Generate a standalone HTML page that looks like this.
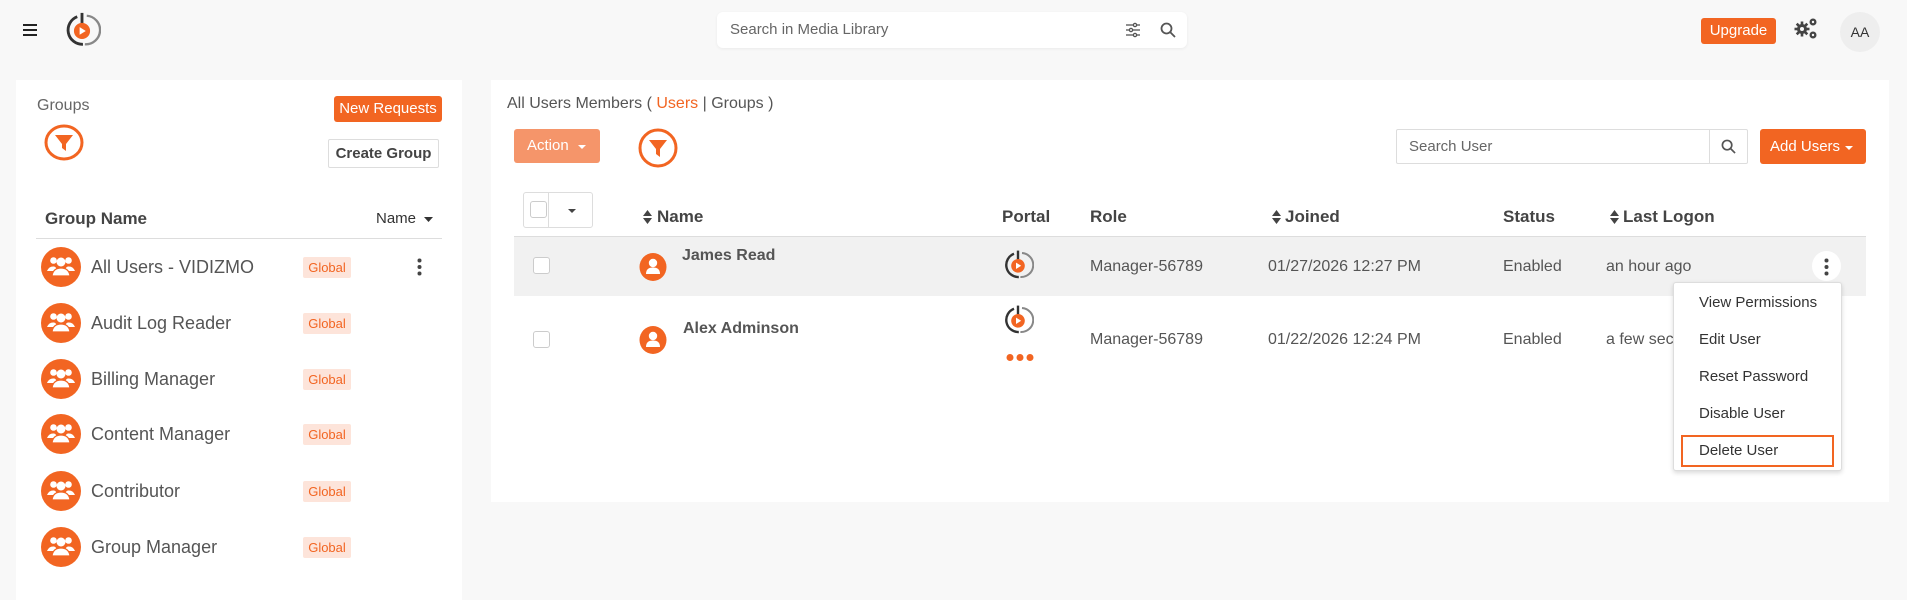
<!DOCTYPE html>
<html><head><meta charset="utf-8"><style>
*{margin:0;padding:0;box-sizing:border-box}
body{width:1907px;height:581px;background:#f8f8f8;font-family:"Liberation Sans",sans-serif;color:#555;position:relative;overflow:hidden}
.a{position:absolute;white-space:nowrap}
.btn{position:absolute;background:#f26522;color:#fff;border-radius:3px;text-align:center;font-size:15px}
.badge{position:absolute;left:303px;width:48px;height:21px;background:#fde4da;color:#f26522;font-size:13px;text-align:center;line-height:21px;border-radius:2px}
.gname{position:absolute;left:91px;font-size:18px;color:#555}
.cb{position:absolute;width:17px;height:17px;border:1px solid #ccc;border-radius:3px;background:#fff}
.th{position:absolute;top:207px;font-size:17px;font-weight:bold;color:#444}
.td{position:absolute;font-size:16px;color:#555}
.mi{position:absolute;left:1699px;font-size:15px;color:#333}
</style></head><body>
<!-- top bar -->
<svg class="a" style="left:23px;top:24px" width="14" height="12"><rect y="0" width="14" height="2" fill="#222"/><rect y="5" width="14" height="2" fill="#222"/><rect y="10" width="14" height="2" fill="#222"/></svg>
<svg class="a" style="left:63px;top:11px" width="38" height="38" viewBox="0 0 40 40"><path d="M15 6 A15 15 0 0 0 21 35" fill="none" stroke="#333" stroke-width="3"/><path d="M25 5 A15 15 0 0 1 23 35" fill="none" stroke="#888" stroke-width="2.5"/><line x1="20" y1="2" x2="20" y2="14" stroke="#333" stroke-width="3"/><circle cx="20" cy="21" r="8.5" fill="#f26522"/><path d="M17.5 17 L24 21 L17.5 25Z" fill="#fff"/></svg>
<div class="a" style="left:717px;top:12px;width:470px;height:36px;background:#fff;border-radius:6px;box-shadow:0 1px 3px rgba(0,0,0,.06)"></div>
<div class="a" style="left:730px;top:21px;font-size:15px;color:#666">Search in Media Library</div>
<svg class="a" style="left:1125px;top:22px" width="16" height="16" viewBox="0 0 16 16" stroke="#555" stroke-width="1.3" fill="none"><line x1="1" y1="3" x2="15" y2="3"/><line x1="1" y1="8" x2="15" y2="8"/><line x1="1" y1="13" x2="15" y2="13"/><circle cx="10" cy="3" r="1.6" fill="#fff"/><circle cx="6" cy="8" r="1.6" fill="#fff"/><circle cx="10" cy="13" r="1.6" fill="#fff"/></svg>
<svg class="a" style="left:1160px;top:22px" width="16" height="16" viewBox="0 0 16 16" stroke="#555" stroke-width="1.8" fill="none"><circle cx="6.5" cy="6.5" r="5"/><line x1="10.3" y1="10.3" x2="15" y2="15"/></svg>
<div class="btn" style="left:1701px;top:18px;width:75px;height:26px;line-height:26px;font-size:15px">Upgrade</div>
<svg class="a" style="left:1793px;top:17px" width="26" height="24" viewBox="0 0 26 24" fill="#444"><circle cx="9" cy="12" r="5"/><g stroke="#444" stroke-width="2.6"><line x1="9" y1="4.5" x2="9" y2="19.5"/><line x1="1.5" y1="12" x2="16.5" y2="12"/><line x1="3.7" y1="6.7" x2="14.3" y2="17.3"/><line x1="14.3" y1="6.7" x2="3.7" y2="17.3"/></g><circle cx="9" cy="12" r="2" fill="#f8f8f8"/><circle cx="20" cy="5" r="3.5" fill="#444"/><circle cx="20" cy="5" r="1.2" fill="#f8f8f8"/><circle cx="20" cy="18" r="3.5" fill="#444"/><circle cx="20" cy="18" r="1.2" fill="#f8f8f8"/></svg>
<div class="a" style="left:1840px;top:12px;width:40px;height:40px;border-radius:50%;background:#eee;text-align:center;line-height:40px;font-size:14px;color:#333">AA</div>

<!-- left panel -->
<div class="a" style="left:16px;top:80px;width:446px;height:520px;background:#fff"></div>
<div class="a" style="left:37px;top:97px;font-size:16px;color:#666">Groups</div>
<div class="btn" style="left:334px;top:96px;width:108px;height:26px;line-height:26px;font-size:15px">New Requests</div>
<svg class="a" style="left:44px;top:124px" width="40" height="37" viewBox="0 0 40 37"><ellipse cx="20" cy="18.5" rx="18" ry="16.5" fill="none" stroke="#f26522" stroke-width="3"/><path d="M11 11 H29 L22 20 V27 L18 24 V20Z" fill="#f26522"/></svg>
<div class="a" style="left:328px;top:139px;width:111px;height:29px;border:1px solid #ddd;border-radius:2px;text-align:center;line-height:27px;font-size:15px;font-weight:bold;color:#444">Create Group</div>
<div class="a" style="left:45px;top:209px;font-size:17px;font-weight:bold;color:#444">Group Name</div>
<div class="a" style="left:376px;top:210px;font-size:15px;color:#333">Name</div>
<svg class="a" style="left:424px;top:217px" width="9" height="5"><path d="M0 0H9L4.5 5Z" fill="#333"/></svg>
<div class="a" style="left:36px;top:238px;width:406px;height:1px;background:#ddd"></div>

<svg width="0" height="0" style="position:absolute"><defs><g id="grp"><circle cx="20" cy="20" r="20" fill="#f26522"/><circle cx="20" cy="15" r="4.5" fill="#fff"/><circle cx="12.5" cy="13.5" r="3.3" fill="#fff"/><circle cx="27.5" cy="13.5" r="3.3" fill="#fff"/><path d="M6 24 Q8 19 13 19.5 Q16 20 15 24Z M34 24 Q32 19 27 19.5 Q24 20 25 24Z" fill="#fff"/><path d="M11 29 Q12 21 20 21 Q28 21 29 29Z" fill="#fff" stroke="#f26522" stroke-width="1.2"/></g>
<g id="logo"><path d="M15 6 A15 15 0 0 0 21 35" fill="none" stroke="#333" stroke-width="3"/><path d="M25 5 A15 15 0 0 1 23 35" fill="none" stroke="#888" stroke-width="2.5"/><line x1="20" y1="2" x2="20" y2="14" stroke="#333" stroke-width="3"/><circle cx="20" cy="21" r="8.5" fill="#f26522"/><path d="M17.5 17 L24 21 L17.5 25Z" fill="#fff"/></g>
<g id="usr"><ellipse cx="14" cy="14" rx="13.5" ry="14" fill="#f26522"/><circle cx="14" cy="10" r="4.2" fill="#fff"/><path d="M7 21 Q7 14.5 14 14.5 Q21 14.5 21 21Z" fill="#fff"/></g></defs></svg>

<svg class="a" style="left:41px;top:247px" width="40" height="40"><use href="#grp"/></svg>
<div class="gname" style="top:257px">All Users - VIDIZMO</div><div class="badge" style="top:257px">Global</div>
<svg class="a" style="left:417px;top:258px" width="5" height="18"><circle cx="2.5" cy="2.5" r="2" fill="#444"/><circle cx="2.5" cy="9" r="2" fill="#444"/><circle cx="2.5" cy="15.5" r="2" fill="#444"/></svg>
<svg class="a" style="left:41px;top:303px" width="40" height="40"><use href="#grp"/></svg>
<div class="gname" style="top:313px">Audit Log Reader</div><div class="badge" style="top:313px">Global</div>
<svg class="a" style="left:41px;top:359px" width="40" height="40"><use href="#grp"/></svg>
<div class="gname" style="top:369px">Billing Manager</div><div class="badge" style="top:369px">Global</div>
<svg class="a" style="left:41px;top:414px" width="40" height="40"><use href="#grp"/></svg>
<div class="gname" style="top:424px">Content Manager</div><div class="badge" style="top:424px">Global</div>
<svg class="a" style="left:41px;top:471px" width="40" height="40"><use href="#grp"/></svg>
<div class="gname" style="top:481px">Contributor</div><div class="badge" style="top:481px">Global</div>
<svg class="a" style="left:41px;top:527px" width="40" height="40"><use href="#grp"/></svg>
<div class="gname" style="top:537px">Group Manager</div><div class="badge" style="top:537px">Global</div>

<!-- right panel -->
<div class="a" style="left:491px;top:80px;width:1398px;height:422px;background:#fff"></div>
<div class="a" style="left:507px;top:95px;font-size:16px;color:#555">All Users Members ( <span style="color:#f26522">Users</span> | Groups )</div>
<div class="a" style="left:514px;top:129px;width:86px;height:34px;background:#f5956a;border-radius:3px;color:#fff;font-size:15px;line-height:34px;padding-left:13px">Action</div>
<svg class="a" style="left:578px;top:145px" width="8" height="4"><path d="M0 0H8L4 4Z" fill="#fff"/></svg>
<svg class="a" style="left:638px;top:128px" width="40" height="40" viewBox="0 0 40 40"><ellipse cx="20" cy="20" rx="18" ry="18" fill="none" stroke="#f26522" stroke-width="3"/><path d="M11 12 H29 L22 21 V29 L18 26 V21Z" fill="#f26522"/></svg>
<div class="a" style="left:1396px;top:129px;width:352px;height:35px;border:1px solid #ddd;border-radius:2px"></div>
<div class="a" style="left:1709px;top:129px;width:1px;height:35px;background:#ddd"></div>
<div class="a" style="left:1409px;top:138px;font-size:15px;color:#666">Search User</div>
<svg class="a" style="left:1721px;top:139px" width="15" height="15" viewBox="0 0 16 16" stroke="#555" stroke-width="1.8" fill="none"><circle cx="6.5" cy="6.5" r="5"/><line x1="10.3" y1="10.3" x2="15" y2="15"/></svg>
<div class="btn" style="left:1760px;top:129px;width:106px;height:35px;line-height:35px;text-align:left;padding-left:10px;font-size:15px">Add Users</div>
<svg class="a" style="left:1845px;top:146px" width="8" height="4"><path d="M0 0H8L4 4Z" fill="#fff"/></svg>

<div class="a" style="left:523px;top:192px;width:70px;height:36px;border:1px solid #ddd;border-radius:3px"></div>
<div class="a" style="left:548px;top:192px;width:1px;height:36px;background:#ddd"></div>
<div class="cb" style="left:530px;top:201px"></div>
<svg class="a" style="left:568px;top:209px" width="8" height="4"><path d="M0 0H8L4 4Z" fill="#444"/></svg>
<svg class="a" style="left:643px;top:210px" width="9" height="15"><path d="M0 6H9L4.5 0Z M0 8H9L4.5 14Z" fill="#444"/></svg>
<div class="th" style="left:657px">Name</div>
<div class="th" style="left:1002px">Portal</div>
<div class="th" style="left:1090px">Role</div>
<svg class="a" style="left:1272px;top:210px" width="9" height="15"><path d="M0 6H9L4.5 0Z M0 8H9L4.5 14Z" fill="#444"/></svg>
<div class="th" style="left:1285px">Joined</div>
<div class="th" style="left:1503px">Status</div>
<svg class="a" style="left:1610px;top:210px" width="9" height="15"><path d="M0 6H9L4.5 0Z M0 8H9L4.5 14Z" fill="#444"/></svg>
<div class="th" style="left:1623px">Last Logon</div>
<div class="a" style="left:514px;top:236px;width:1352px;height:60px;background:#f1f1f1;border-top:1px solid #ddd"></div>

<div class="cb" style="left:533px;top:257px"></div>
<svg class="a" style="left:639px;top:253px" width="28" height="28"><use href="#usr"/></svg>
<div class="td" style="left:682px;top:247px;font-weight:bold;color:#555">James Read</div>
<svg class="a" style="left:1002px;top:249px" width="32" height="32" viewBox="0 0 40 40"><use href="#logo"/></svg>
<div class="td" style="left:1090px;top:258px">Manager-56789</div>
<div class="td" style="left:1268px;top:258px">01/27/2026 12:27 PM</div>
<div class="td" style="left:1503px;top:258px">Enabled</div>
<div class="td" style="left:1606px;top:258px">an hour ago</div>

<div class="cb" style="left:533px;top:331px"></div>
<svg class="a" style="left:639px;top:326px" width="28" height="28"><use href="#usr"/></svg>
<div class="td" style="left:683px;top:320px;font-weight:bold;color:#555">Alex Adminson</div>
<svg class="a" style="left:1002px;top:304px" width="32" height="32" viewBox="0 0 40 40"><use href="#logo"/></svg>
<svg class="a" style="left:1006px;top:353px" width="28" height="9"><circle cx="4" cy="4.5" r="3.5" fill="#f26522"/><circle cx="14" cy="4.5" r="3.5" fill="#f26522"/><circle cx="24" cy="4.5" r="3.5" fill="#f26522"/></svg>
<div class="td" style="left:1090px;top:331px">Manager-56789</div>
<div class="td" style="left:1268px;top:331px">01/22/2026 12:24 PM</div>
<div class="td" style="left:1503px;top:331px">Enabled</div>
<div class="td" style="left:1606px;top:331px">a few sec</div>

<!-- kebab highlight / dropdown -->
<div class="a" style="left:1812px;top:251px;width:29px;height:30px;background:#fff;border-radius:50%"></div>
<svg class="a" style="left:1824px;top:258px" width="5" height="18"><circle cx="2.5" cy="2.5" r="2" fill="#444"/><circle cx="2.5" cy="9" r="2" fill="#444"/><circle cx="2.5" cy="15.5" r="2" fill="#444"/></svg>
<div class="a" style="left:1673px;top:282px;width:169px;height:189px;background:#fff;border:1px solid #ddd;border-radius:3px;box-shadow:0 2px 5px rgba(0,0,0,.15)"></div>
<div class="mi" style="top:294px">View Permissions</div>
<div class="mi" style="top:331px">Edit User</div>
<div class="mi" style="top:368px">Reset Password</div>
<div class="mi" style="top:405px">Disable User</div>
<div class="a" style="left:1681px;top:435px;width:153px;height:32px;border:2px solid #f26522"></div>
<div class="mi" style="top:442px">Delete User</div>
</body></html>
